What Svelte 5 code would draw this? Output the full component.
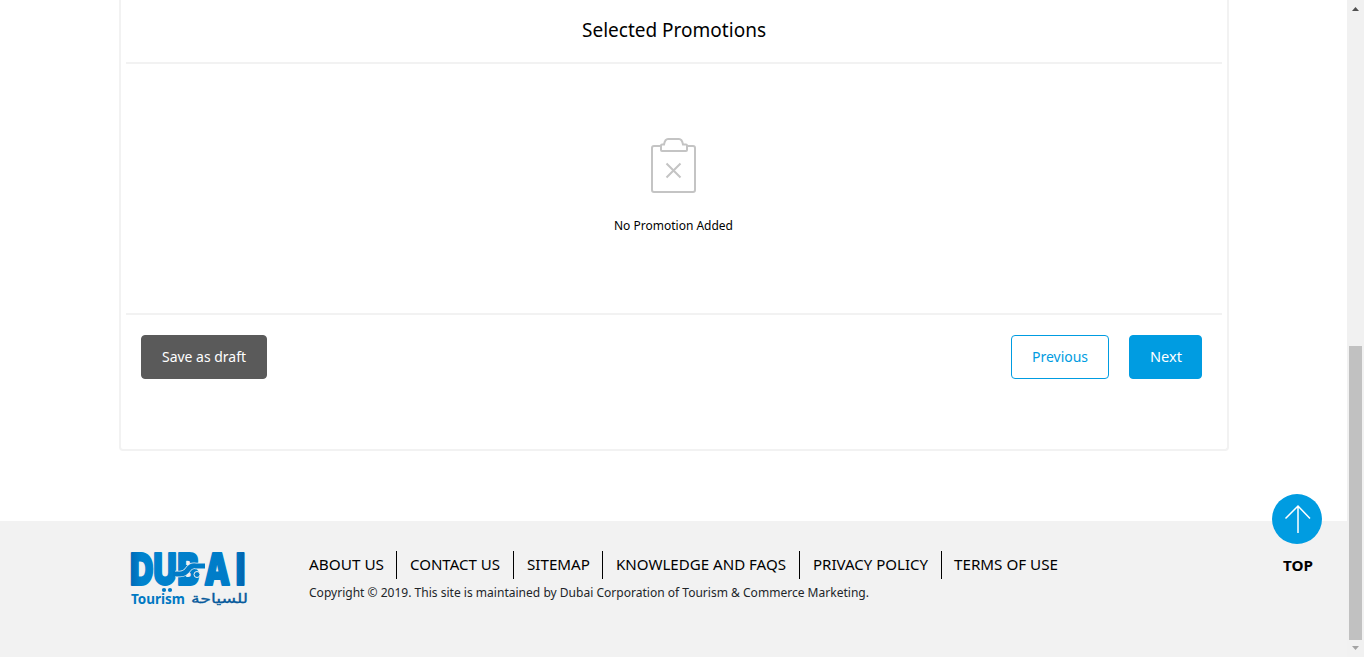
<script>
  const links = [
    { label: 'ABOUT US', width: 75 },
    { label: 'CONTACT US', width: 90, gap: 13 },
    { label: 'SITEMAP', width: 63 },
    { label: 'KNOWLEDGE AND FAQS', width: 170, gap: 13 },
    { label: 'PRIVACY POLICY', width: 115, gap: 13 },
    { label: 'TERMS OF USE', width: 104 }
  ];
</script>

{#snippet line(text, width, size, height, baseline, weight = 400)}
  <svg class="line" {width} {height} role="img" aria-label={text}>
    <text x="0" y={baseline} font-size={size} font-weight={weight} textLength={width} lengthAdjust="spacingAndGlyphs" fill="currentColor">{text}</text>
  </svg>
{/snippet}

<div class="screen">
  <div class="page">
    <main>
      <section class="card">
        <h2>{@render line('Selected Promotions', 184, 20, 30, 22)}</h2>
        <div class="empty">
          <svg width="46" height="57" viewBox="0 0 46 57" fill="none" stroke="#c4c4c4" stroke-width="2">
            <path d="M11 9H4Q2 9 2 11V53Q2 55 4 55H43Q45 55 45 53V11Q45 9 43 9H37" />
            <path d="M11 13V8.500Q11 7.500 12 7.500H14Q15 2 18 2H29Q32 2 33 7.500H36Q37 7.500 37 8.500V13Q37 14 36 14H12Q11 14 11 13" />
            <path d="M16.500 26.500L30.500 40.500M30.500 26.500L16.500 40.500" />
          </svg>
          <p>{@render line('No Promotion Added', 119, 12.5, 20, 14)}</p>
        </div>
        <div class="actions">
          <button class="draft">{@render line('Save as draft', 84, 13.5, 20, 15)}</button>
          <button class="previous">{@render line('Previous', 56, 13.5, 20, 15)}</button>
          <button class="next">{@render line('Next', 32, 13.5, 20, 15)}</button>
        </div>
      </section>
    </main>
    <footer>
      <svg class="logo" width="120" height="60" viewBox="0 0 120 60">
        <defs>
          <linearGradient id="blue" x1="0" x2="1" y1="0" y2="0">
            <stop stop-color="#0068b5" /><stop offset=".1" stop-color="#0083ce" />
            <stop offset=".9" stop-color="#007bc7" /><stop offset="1" stop-color="#0061ad" />
          </linearGradient>
        </defs>
        <text class="wordmark" transform="translate(0 35.500) scale(.74 1)" x="0 31.500 64 100.500 143" y="0" fill="url(#blue)" stroke="url(#blue)">DUBAI</text>
        <path d="M45 25H50Q55 25 58 20.500T66 17H73" fill="none" stroke="#f2f2f2" stroke-width="6.500" />
        <path d="M43 25H50Q55 25 58 20.500T66 17H75" fill="none" stroke="#007bc7" stroke-width="5" />
        <circle cx="67" cy="25.500" r="3" fill="#007bc7" stroke="#f2f2f2" />
        <circle cx="34" cy="41" r="2.100" fill="#007bc7" />
        <circle cx="40" cy="41" r="2.100" fill="#007bc7" />
        <text class="tourism" x="1" y="54.500" textLength="54" lengthAdjust="spacingAndGlyphs">Tourism</text>
        <text class="arabic" x="61" y="53.500" textLength="57" lengthAdjust="spacingAndGlyphs">للسياحة</text>
      </svg>
      <div class="info">
        <nav>
          {#each links as link}
            <a href="#top" class:wide={link.gap}>{@render line(link.label, link.width, 14, 28, 19)}</a>
          {/each}
        </nav>
        <p>{@render line('Copyright © 2019. This site is maintained by Dubai Corporation of Tourism & Commerce Marketing.', 560, 12.5, 20, 14)}</p>
      </div>
    </footer>
  </div>

  <a class="top" href="#top">
    <span class="circle">
      <svg width="50" height="50" fill="none" stroke="#fff" stroke-width="1.500"><path d="M26 39V12M13.500 24.500L26 12L38 24.500" /></svg>
    </span>
    {@render line('TOP', 30, 14, 20, 15, 700)}
  </a>

  <div class="scrollbar">
    <svg width="17" height="17"><path d="M5 11L8.500 7L12 11Z" fill="#505050" /></svg>
    <div class="thumb"></div>
    <svg width="17" height="17"><path d="M5 6H12L8.500 10Z" fill="#a3a3a3" /></svg>
  </div>
</div>

<style>
  :global(body) { margin: 0; background: #fff; overflow: hidden; }
  * { box-sizing: border-box; }
  .screen { position: relative; display: flex; width: 1364px; height: 657px; overflow: hidden; color: #000; font-family: "Noto Sans", "Open Sans", sans-serif; }
  .page { width: 1347px; display: flex; flex-direction: column; }
  main { height: 521px; padding-left: 119px; }
  .card { width: 1110px; height: 451px; border: 2px solid #f2f2f2; border-top: 0; border-radius: 0 0 4px 4px; padding: 0 5px; }
  h2, p { margin: 0; }
  .line { display: block; overflow: visible; }
  h2 { height: 64px; padding-top: 15px; border-bottom: 2px solid #f2f2f2; display: flex; justify-content: center; }
  .empty { height: 251px; border-bottom: 2px solid #f2f2f2; display: flex; flex-direction: column; align-items: center; padding: 73px 1px 0 0; }
  .empty > svg { margin-right: 1px; }
  .empty p { margin-top: 22px; }
  .actions { display: flex; gap: 20px; padding: 20px 20px 0 15px; }
  button { height: 44px; padding: 0; border: 1px solid #009ce1; border-radius: 4px; background: #009ce1; color: #fff; font-family: inherit; display: flex; align-items: center; justify-content: center; }
  .draft { width: 126px; margin-right: auto; background: #5a5a5a; border-color: #5a5a5a; }
  .previous { width: 98px; background: #fff; color: #009ce1; }
  .next { width: 73px; }
  footer { height: 136px; background: #f2f2f2; display: flex; padding: 28px 0 0 130px; }
  .logo { margin-right: 59px; overflow: visible; }
  .wordmark { font: 900 44px Inter, sans-serif; stroke-width: 2; stroke-linejoin: round; }
  .tourism { font: 700 14px "Noto Sans", sans-serif; fill: #0079c3; }
  .arabic { font: 400 13.5px "DejaVu Sans", sans-serif; fill: #075b9c; stroke: #075b9c; stroke-width: .3; }
  .info { padding-top: 2px; }
  nav { display: flex; }
  a { color: #000; text-decoration: none; }
  nav a { padding-right: 12px; margin-right: 13px; border-right: 1px solid #000; }
  nav a.wide { padding-right: 13px; }
  nav a:last-child { border: 0; margin: 0 0 0 -1px; }
  .info p { color: #212529; margin-top: 4px; }
  .top { position: absolute; left: 1272px; top: 494px; width: 50px; display: flex; flex-direction: column; align-items: center; gap: 12px; }
  .circle { width: 50px; height: 50px; border-radius: 50%; background: #009ce1; }
  .top .line { margin-left: 2px; }
  .scrollbar { width: 17px; background: #f1f1f1; display: flex; flex-direction: column; justify-content: flex-end; }
  .scrollbar svg { display: block; flex: none; }
  .scrollbar svg:first-child { margin-bottom: auto; }
  .thumb { width: 13px; height: 294px; background: #c1c1c1; margin-left: 2px; }
</style>
